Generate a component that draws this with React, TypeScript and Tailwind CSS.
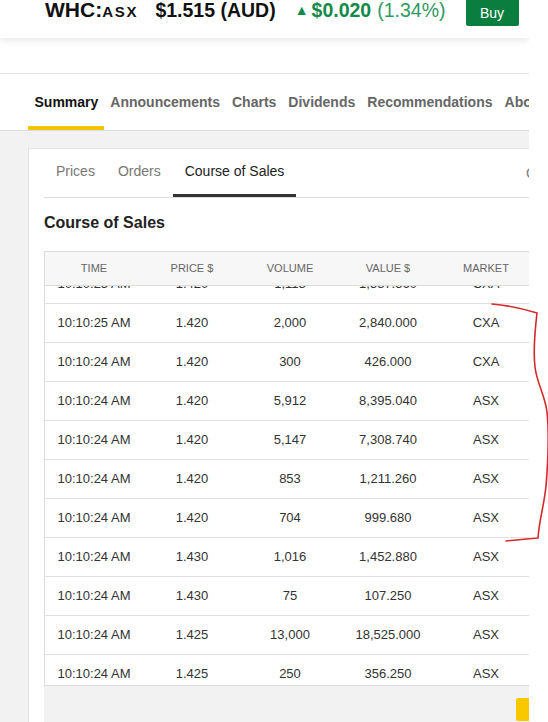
import React from 'react'

const MAIN_TABS = ['Summary', 'Announcements', 'Charts', 'Dividends', 'Recommendations', 'About']
const HEADERS = ['Time', 'Price $', 'Volume', 'Value $', 'Market']

// first row is half scrolled out of view
const SALES = [
    ['10:10:25 AM', '1.420', '1,118', '1,587.560', 'CXA'],
    ['10:10:25 AM', '1.420', '2,000', '2,840.000', 'CXA'],
    ['10:10:24 AM', '1.420', '300', '426.000', 'CXA'],
    ['10:10:24 AM', '1.420', '5,912', '8,395.040', 'ASX'],
    ['10:10:24 AM', '1.420', '5,147', '7,308.740', 'ASX'],
    ['10:10:24 AM', '1.420', '853', '1,211.260', 'ASX'],
    ['10:10:24 AM', '1.420', '704', '999.680', 'ASX'],
    ['10:10:24 AM', '1.430', '1,016', '1,452.880', 'ASX'],
    ['10:10:24 AM', '1.430', '75', '107.250', 'ASX'],
    ['10:10:24 AM', '1.425', '13,000', '18,525.000', 'ASX'],
    ['10:10:24 AM', '1.425', '250', '356.250', 'ASX'],
    ['10:10:24 AM', '1.425', '400', '570.000', 'ASX'],
]

function QuoteHeader() {
    return (
        <div className="relative z-10 flex h-[38px] items-start bg-white pl-[45px] shadow-[0_3px_7px_rgba(0,0,0,0.09)]">
            <div className="-mt-[1px] flex items-baseline leading-none text-[#111]">
                <span className="text-[21px] font-bold">WHC:</span>
                <span className="text-[15px] font-bold tracking-[1.8px]">ASX</span>
                <span className="ml-[17px] text-[19.5px] font-bold">$1.515 (AUD)</span>
                <span className="ml-[19px] text-[#128a4a]">
                    <span className="relative -top-[2px] mr-[3px] text-[14px]">▲</span>
                    <span className="text-[19.5px] font-bold">$0.020</span>
                    <span className="ml-[6px] text-[19.5px] text-[#2f9a62]">(1.34%)</span>
                </span>
            </div>
            <button className="ml-[20px] flex h-[26px] w-[53px] items-center justify-center rounded-b-[2px] bg-[#0b7d3e] text-[14px] text-white">
                Buy
            </button>
        </div>
    )
}

function MainTabs() {
    return (
        <div className="flex border-b border-[#dcdcdc] bg-white pl-[28px]">
            {MAIN_TABS.map((tab, index) => (
                <div
                    key={tab}
                    className={`flex h-[56px] shrink-0 items-center border-b-4 pl-[6.5px] pr-[5.5px] pt-[5px] text-[14px] font-bold ${
                        index === 0 ? 'border-[#f5c400] text-[#111]' : 'border-transparent text-[#666]'
                    }`}
                >
                    {tab}
                </div>
            ))}
        </div>
    )
}

function SalesTable() {
    return (
        <div className="mt-[18px] w-[491px] border border-r-0 border-[#dcdcdc] bg-white">
            <div className="grid h-[34px] grid-cols-5 items-center border-b border-[#dcdcdc] bg-[#f7f7f7]">
                {HEADERS.map((h) => (
                    <div key={h} className="text-center text-[11px] uppercase text-[#666]">
                        {h}
                    </div>
                ))}
            </div>
            <div className="h-[399px] overflow-hidden">
                <div className="-mt-[21px]">
                    {SALES.map((row, i) => (
                        <div
                            key={`row_${i}`}
                            className="grid h-[39px] grid-cols-5 items-center border-b border-[#e0e0e0] text-[13px] text-[#333]"
                        >
                            {row.map((cell, j) => (
                                <div key={`cell_${i}_${j}`} className="text-center">
                                    {cell}
                                </div>
                            ))}
                        </div>
                    ))}
                </div>
            </div>
        </div>
    )
}

function CourseCard() {
    return (
        <div className="w-[560px] border border-r-0 border-[#e2e2e2] bg-white pl-[15px]">
            <div className="relative flex border-b border-[#dcdcdc] text-[14px]">
                <div className="flex h-[48px] items-center border-b-[3px] border-transparent px-3 text-[#777]">Prices</div>
                <div className="flex h-[48px] items-center border-b-[3px] border-transparent pl-[11px] pr-3 text-[#777]">
                    Orders
                </div>
                <div className="flex h-[48px] items-center border-b-[3px] border-[#333] px-3 text-[#222]">
                    Course of Sales
                </div>
                <span className="absolute left-[482px] top-[14px] text-[#667c88]">Company</span>
            </div>
            <div className="mt-[15px] text-[16px] font-bold leading-[20px] text-[#222]">Course of Sales</div>
            <SalesTable />
            <div className="h-[60px] w-[491px] bg-[#f2f2f2] pt-[12px]">
                <div className="ml-[472px] h-[23px] w-[80px] rounded-[2px] bg-[#f8c900]" />
            </div>
        </div>
    )
}

export default function App() {
    return (
        <div className="relative h-[722px] w-[548px] overflow-hidden bg-white font-['Liberation_Sans',Arial,sans-serif]">
            <div className="w-[529px] overflow-hidden">
                <QuoteHeader />
                <div className="h-[36px] border-b border-[#e6e6e6] bg-white" />
                <MainTabs />
                <div className="h-[600px] bg-[#f2f2f2] pl-[28px] pt-[17px]">
                    <CourseCard />
                </div>
            </div>
            {/* hand-drawn red bracket */}
            <svg className="absolute left-0 top-0" width="548" height="722" viewBox="0 0 548 722" fill="none">
                <path
                    d="M492 304 C506 305 524 309 537 313 C535 330 533 350 535 367 C537 384 545 395 547 412 C549 432 548 462 546 486 C544 506 539 521 538 538 C526 539 515 540 506 541"
                    stroke="#d22a2a"
                    strokeWidth="1.6"
                    strokeLinecap="round"
                />
            </svg>
        </div>
    )
}
